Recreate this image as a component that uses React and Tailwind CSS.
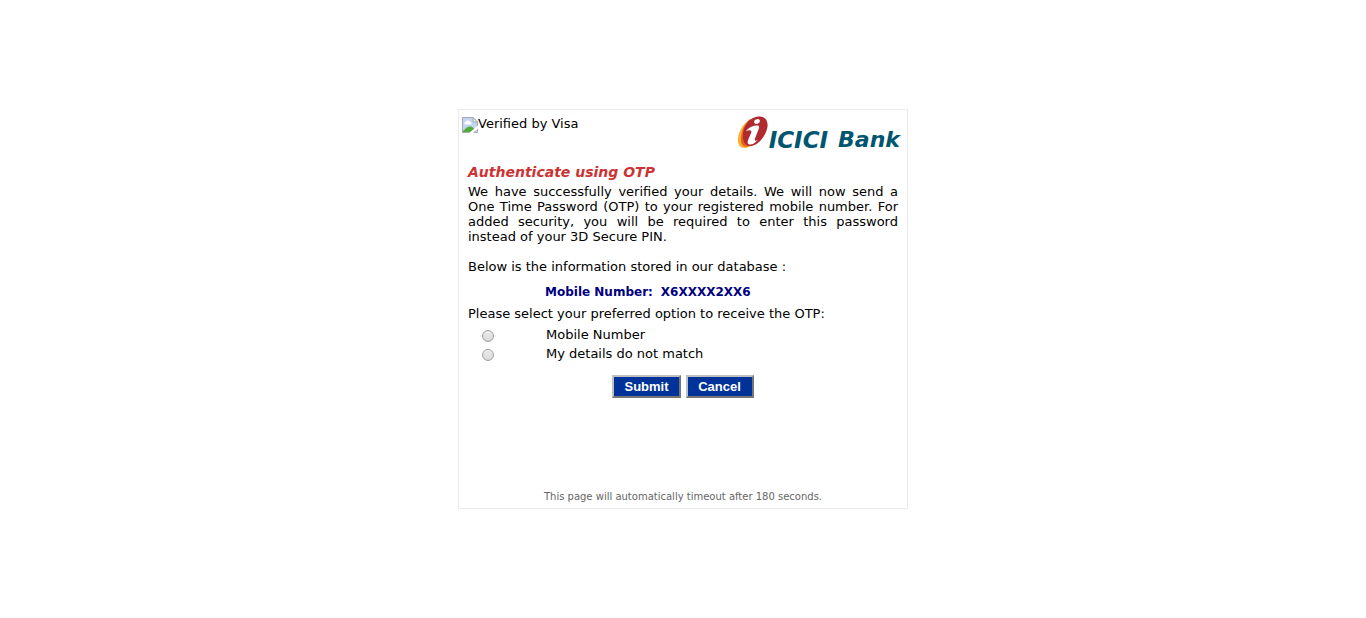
function BrokenImage() {
  return (
    <svg aria-hidden="true" className="size-4 shrink-0" viewBox="0 0 16 16">
      <path d="M0.5 0.5H11L15.500 5V15.500H0.5Z" fill="#c3d5f2" stroke="#a3a8ad" />
      <path d="M3 7.500a1.500 1.500 0 0 1 .8-2.700 2.200 2.200 0 0 1 4.200 0A1.400 1.400 0 0 1 8.500 7.500Z" fill="#fff" />
      <path d="M1 15V14C3.500 11.500 5.500 9.500 8 9.500S12 11 13.500 15Z" fill="#52ab3a" />
      <path d="M11 0.5V5H15.500Z" fill="#f3f3f3" stroke="#a3a8ad" />
      <path d="M6.500 16.500L16.500 8V11L10.500 16.500Z" fill="#fff" />
    </svg>
  );
}

function BankLogo() {
  return (
    <div className="flex items-end pt-0.5 text-[#00566f] italic">
      <svg aria-hidden="true" className="h-[34px] w-8" viewBox="0 0 32 34">
        <path d="M14 3C5 8 0 18 1 26C2 32 7 33 12 31L20 25L10 22Z" fill="#fbb034" />
        <path d="M13 3C6 9 3.500 18 4 25C4.500 31 9 32 14 29L19 25Z" fill="#e8601c" />
        <path d="M21 0.500C29 -0.500 32 6 30 13C27.500 22 20 30 13 30C6 30 4.500 21 7 13C9.500 6 15 1 21 0.500Z" fill="#b02a30" />
        <ellipse cx="20" cy="5.500" rx="3" ry="2.200" transform="rotate(-30 20 5.5)" fill="#fff" />
        <path d="M9 15C12.500 11 16 9.500 20.500 9.500C22.500 9.500 22.500 11 21.500 13.500L18 22.500C17.200 25 18.500 25.500 21 23.500C18.500 27 15 29 12.500 28.500C10 28 10.500 25.500 11.500 23L14.300 16.500C15 14 12.500 13.500 9 15Z" fill="#fff" />
      </svg>
      <span className="text-[23px] leading-5 font-bold">ICICI</span>
      <span className="ml-2.5 text-[22px] leading-5 font-bold">Bank</span>
    </div>
  );
}

const options = [
  { id: "mobile", label: "Mobile Number" },
  { id: "mismatch", label: "My details do not match" },
];

const buttonClass =
  "h-[23px] min-w-[68px] border-2 border-t-[#c0c0c0] border-l-[#c0c0c0] border-r-[#767676] border-b-[#767676] bg-[#003399] px-[10px] font-['Liberation_Sans',Arial,sans-serif] text-[13px] leading-[19px] font-bold text-white";

export default function App() {
  return (
    <main className="flex min-h-screen items-center justify-center bg-white font-['DejaVu_Sans',Verdana,sans-serif] text-[13px] leading-[15px] text-black">
      <form
        className="flex min-h-[400px] w-full max-w-[450px] flex-col border border-[#ebebeb]"
        onSubmit={(event) => event.preventDefault()}
      >
        <header className="flex h-10 items-start justify-between pt-1 pr-[7px] pl-[3px]">
          <div className="flex pt-0.5">
            <span className="pt-px">
              <BrokenImage />
            </span>
            <span>Verified by Visa</span>
          </div>
          <BankLogo />
        </header>

        <section className="px-[9px] pt-3.5">
          <h1 className="text-[14px] leading-[17px] font-bold text-[#cc3333] italic">Authenticate using OTP</h1>
          <p className="mt-[3px] text-justify">
            We have successfully verified your details. We will now send a One Time Password (OTP) to your registered
            mobile number. For added security, you will be required to enter this password instead of your 3D Secure
            PIN.
          </p>
          <p className="mt-[15px]">Below is the information stored in our database :</p>
          <p className="mt-[11px] flex gap-2 pl-[77px] text-[12px] font-bold text-[#000080]">
            <span>Mobile Number:</span>
            <span>X6XXXX2XX6</span>
          </p>
          <fieldset className="mt-1.5">
            <legend>Please select your preferred option to receive the OTP:</legend>
            <div className="mt-1 flex flex-col">
              {options.map((option) => (
                <div key={option.id} className="flex h-[19px] items-end">
                  <input
                    id={option.id}
                    type="radio"
                    name="delivery"
                    className="mb-0.5 ml-3.5 size-3 appearance-none rounded-full border border-[#a0a0a0] bg-linear-to-b from-[#ececec] to-[#d8d8d8] checked:border-4 checked:border-[#003399]"
                  />
                  <label htmlFor={option.id} className="mb-0.5 ml-[52px]">
                    {option.label}
                  </label>
                </div>
              ))}
            </div>
          </fieldset>
        </section>

        <div className="mt-3 flex justify-center gap-[5px]">
          <button type="submit" className={buttonClass}>
            Submit
          </button>
          <button type="button" className={buttonClass}>
            Cancel
          </button>
        </div>

        <footer className="mt-auto pb-1 text-center text-[10px] text-[#666666]">
          This page will automatically timeout after 180 seconds.
        </footer>
      </form>
    </main>
  );
}
